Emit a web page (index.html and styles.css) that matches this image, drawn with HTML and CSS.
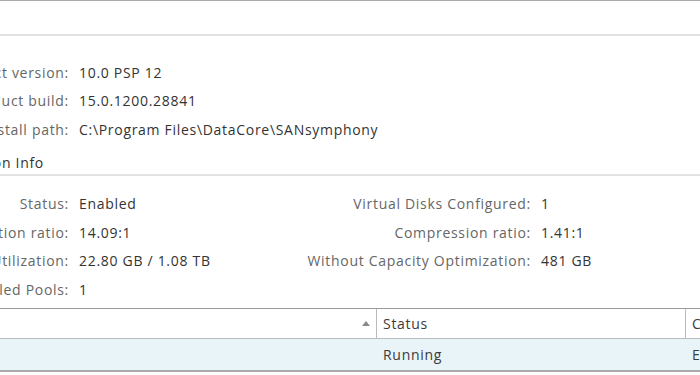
FILE: index.html
```html
<!DOCTYPE html>
<html lang="en">
<head>
    <meta charset="UTF-8">
    <title>Server Details</title>
    <link rel="stylesheet" href="styles.css">
</head>
<body>
    <div class="page">
        <!-- Empty group header -->
        <div class="group-head"></div>

        <!-- Version info -->
        <div class="info-grid top-grid">
            <div class="label"><span>Product version:</span></div>
            <div class="value">10.0 PSP 12</div>
            <div class="label"><span></span></div>
            <div class="value"></div>

            <div class="label"><span>Product build:</span></div>
            <div class="value">15.0.1200.28841</div>
            <div class="label"><span></span></div>
            <div class="value"></div>

            <div class="label"><span>Install path:</span></div>
            <div class="value wide">C:\Program Files\DataCore\SANsymphony</div>
        </div>

        <div class="section-title">
            <div class="section-name"><span>Capacity Optimization Info</span></div>
        </div>

        <!-- Capacity optimization -->
        <div class="info-grid">
            <div class="label"><span>Status:</span></div>
            <div class="value">Enabled</div>
            <div class="label"><span>Virtual Disks Configured:</span></div>
            <div class="value">1</div>

            <div class="label"><span>Deduplication ratio:</span></div>
            <div class="value">14.09:1</div>
            <div class="label"><span>Compression ratio:</span></div>
            <div class="value">1.41:1</div>

            <div class="label"><span>Capacity Utilization:</span></div>
            <div class="value">22.80 GB / 1.08 TB</div>
            <div class="label"><span>Without Capacity Optimization:</span></div>
            <div class="value">481 GB</div>

            <div class="label"><span>Enabled Pools:</span></div>
            <div class="value">1</div>
        </div>

        <!-- Pools table -->
        <div class="table">
            <div class="row header">
                <div class="cell col-name"><span class="sort-arrow"></span></div>
                <div class="cell col-status">Status</div>
                <div class="cell col-extra">Capacity</div>
            </div>
            <div class="row selected">
                <div class="cell col-name"></div>
                <div class="cell col-status">Running</div>
                <div class="cell col-extra">Enabled</div>
            </div>
        </div>
    </div>
</body>
</html>
```

FILE: styles.css
```css
/* General Styles */
body {
    margin: 0;
    padding: 0;
    background-color: #fff;
    font-family: "Open Sans", "Noto Sans", sans-serif;
    font-size: 14px;
    letter-spacing: 0.7px;
    color: #3b3b3b;
    overflow: hidden;
}

.page {
    width: 700px;
    height: 375px;
    border-top: 1px solid #aaa;
    box-sizing: border-box;
}

.group-head {
    height: 33px;
    border-bottom: 2px solid #e2e2e2;
}

/* Label / value grids */
.info-grid {
    display: grid;
    grid-template-columns: 69px 212px 230px auto;
    column-gap: 10px;
    grid-auto-rows: 28.5px;
    align-items: center;
    white-space: nowrap;
}

.top-grid {
    padding-top: 22px;
}

.label {
    display: flex;
    justify-content: flex-end;
    color: #666;
}

.value {
    color: #333;
}

.value.wide {
    grid-column: 2 / 5;
}

/* Section header with rule */
.section-title {
    display: flex;
    align-items: center;
    height: 23px;
    padding-top: 7px;
    border-bottom: 2px solid #e2e2e2;
    margin-bottom: 14px;
}

.section-name {
    display: flex;
    justify-content: flex-end;
    width: 44px;
    white-space: nowrap;
    color: #333;
}

/* Table */
.table {
    margin-top: 4px;
    white-space: nowrap;
}

.row {
    display: flex;
}

.row.header {
    height: 29px;
    border-top: 1px solid #999;
    border-bottom: 1px solid #bbb;
}

.row.selected {
    height: 31px;
    background-color: #e8f4f7;
    border-bottom: 2px solid #aaa;
}

.cell {
    display: flex;
    align-items: center;
    padding-left: 6px;
    overflow: hidden;
    box-sizing: border-box;
}

.col-name {
    width: 377px;
    padding: 0 6px 0 0;
    justify-content: flex-end;
}

.col-status {
    width: 309px;
}

.header .col-name,
.header .col-status {
    border-right: 1px solid #bbb;
}

.col-extra {
    flex: 1;
}

.sort-arrow {
    width: 0;
    height: 0;
    border-left: 4px solid transparent;
    border-right: 4px solid transparent;
    border-bottom: 5px solid #8a8a8a;
}
```
